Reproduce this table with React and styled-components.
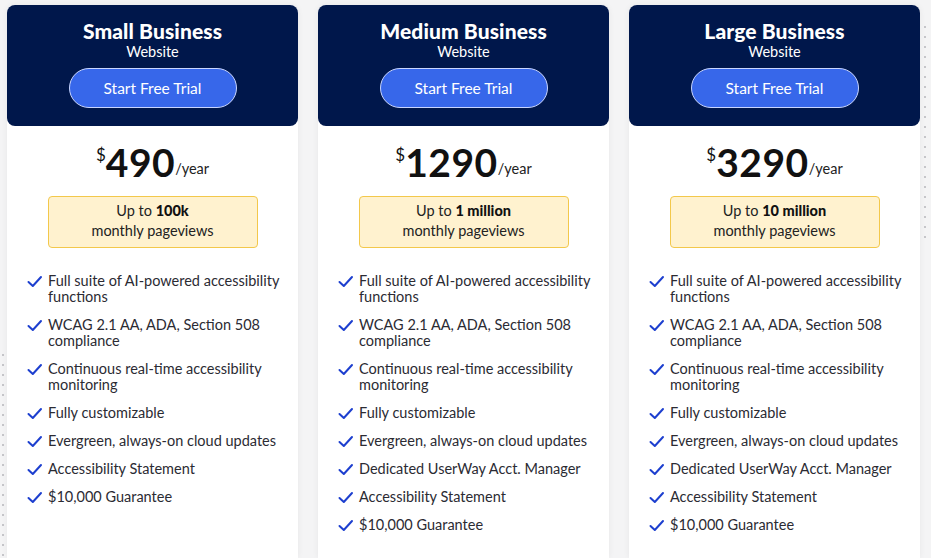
import styled, { createGlobalStyle } from "styled-components";
import React from "react";

const GlobalStyle = createGlobalStyle`
    * { box-sizing: border-box; }
    body {
        margin: 0;
        background: #f4f4f5;
        font-family: "Lato", "Liberation Sans", sans-serif;
    }
`;

// dotted decoration strips at the page edges
const Page = styled.div`
    position: relative;
    width: 931px;
    height: 558px;
    overflow: hidden;
    display: flex;
    gap: 20px;
    padding: 5px 0 0 7px;
    background-color: #f4f4f5;

    &::before, &::after {
        content: "";
        position: absolute;
        width: 6px;
        background-image: radial-gradient(circle, #c6c6ca 1px, transparent 1.5px);
        background-size: 6px 10px;
    }
    &::before { left: 0; top: 350px; height: 208px; }
    &::after { left: 922px; top: 22px; height: 220px; }
`;

const Card = styled.div`
    position: relative;
    z-index: 1;
    width: 291px;
    flex-shrink: 0;
    background: #fff;
    border-radius: 8px 8px 0 0;
    box-shadow: 0 0 6px rgba(0, 0, 0, 0.06);
    display: flex;
    flex-direction: column;
    align-items: center;
`;

const Header = styled.div`
    width: 100%;
    height: 121px;
    background: #00174b;
    border-radius: 8px;
    display: flex;
    flex-direction: column;
    align-items: center;
    padding-top: 14px;
    color: #fff;
`;

const Title = styled.h3`
    margin: 0;
    font-size: 21px;
    line-height: 24px;
    font-weight: 900;
    letter-spacing: 0.1px;
`;

const Sub = styled.div`
    font-size: 14.5px;
    line-height: 18px;
`;

const Button = styled.button`
    margin-top: 7px;
    width: 168px;
    height: 40px;
    border-radius: 20px;
    border: 1px solid #c9d6ff;
    background: #3767ea;
    color: #fff;
    font-family: inherit;
    font-size: 15.5px;
    cursor: pointer;
`;

const Price = styled.div`
    margin-top: 16px;
    display: flex;
    align-items: flex-start;
    color: #111;
`;

const Dollar = styled.span`
    font-size: 17px;
    margin-top: 2px;
`;

const Amount = styled.span`
    font-size: 39px;
    line-height: 41px;
    font-weight: 700;
    letter-spacing: 0.5px;
`;

const Per = styled.span`
    font-size: 14.5px;
    align-self: flex-end;
    margin-bottom: 6px;
    color: #222;
`;

const Quota = styled.div`
    margin-top: 13px;
    width: 210px;
    height: 52px;
    background: #fff2cf;
    border: 1px solid #f3c84b;
    border-radius: 4px;
    text-align: center;
    font-size: 14.5px;
    line-height: 20px;
    padding-top: 4px;
    color: #222;

    b { font-weight: 900; color: #111; }
`;

const List = styled.ul`
    list-style: none;
    margin: 25px 0 0;
    padding: 0 10px 0 20px;
    width: 100%;
    display: flex;
    flex-direction: column;
    gap: 12px;
`;

const Item = styled.li`
    display: flex;
    gap: 5px;
    font-size: 14.5px;
    line-height: 16px;
    color: #2b2b33;
`;

const Check = () => (
    <svg width="16" height="16" viewBox="0 0 16 16" style={{ flexShrink: 0 }}>
        <path d="M1.5 9 L5.8 13 L14 4" fill="none" stroke="#1d3fcf" strokeWidth="2" strokeLinecap="round" strokeLinejoin="round" />
    </svg>
);

const common = [
    "Full suite of AI-powered accessibility functions",
    "WCAG 2.1 AA, ADA, Section 508 compliance",
    "Continuous real-time accessibility monitoring",
    "Fully customizable",
    "Evergreen, always-on cloud updates",
];

const plans = [
    { name: "Small Business", price: "490", views: "100k", extra: [] },
    { name: "Medium Business", price: "1290", views: "1 million", extra: ["Dedicated UserWay Acct. Manager"] },
    { name: "Large Business", price: "3290", views: "10 million", extra: ["Dedicated UserWay Acct. Manager"] },
];

const App = () => (
    <>
        <GlobalStyle />
        <Page>
            {plans.map((p) => (
                <Card key={p.name}>
                    <Header>
                        <Title>{p.name}</Title>
                        <Sub>Website</Sub>
                        <Button>Start Free Trial</Button>
                    </Header>
                    <Price>
                        <Dollar>$</Dollar>
                        <Amount>{p.price}</Amount>
                        <Per>/year</Per>
                    </Price>
                    <Quota>
                        Up to <b>{p.views}</b>
                        <br />
                        monthly pageviews
                    </Quota>
                    <List>
                        {[...common, ...p.extra, "Accessibility Statement", "$10,000 Guarantee"].map((f) => (
                            <Item key={f}>
                                <Check />
                                <span>{f}</span>
                            </Item>
                        ))}
                    </List>
                </Card>
            ))}
        </Page>
    </>
);

export default App;
